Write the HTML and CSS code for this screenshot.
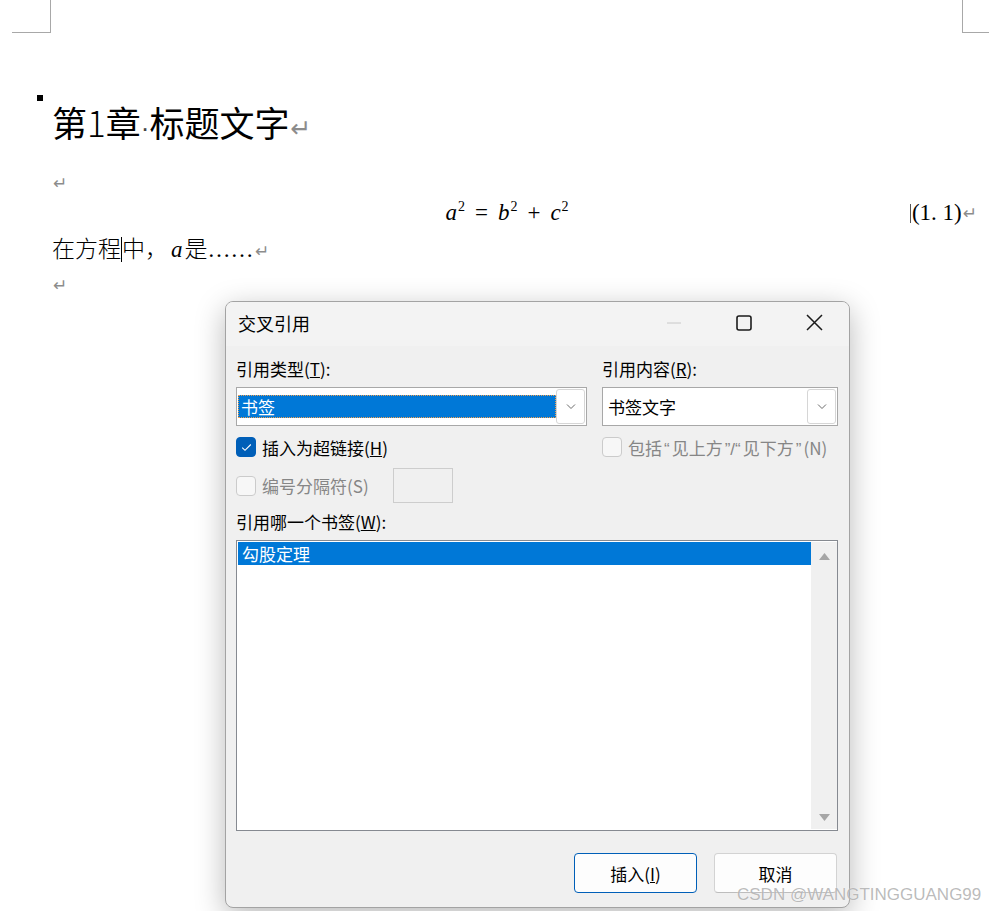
FILE: index.html
```html
<!DOCTYPE html>
<html lang="zh-CN">
<head>
    <meta charset="UTF-8">
    <title>交叉引用</title>
    <link rel="stylesheet" href="styles.css">
</head>
<body>
<div class="page">
    <div class="crop crop-left"></div>
    <div class="crop crop-right"></div>

    <!-- document text behind the dialog -->
    <div class="doc">
        <h1 class="heading"><span class="bullet"></span>第<span class="thin">1</span>章<span class="dot">·</span>标题文字<span class="ret">↵</span></h1>
        <p class="line first"><span class="ret">↵</span></p>
        <div class="line equation">
            <span class="spacer"></span>
            <span class="eq"><i>a</i><sup>2</sup><span class="op">=</span><i>b</i><sup>2</sup><span class="op">+</span><i>c</i><sup>2</sup></span>
            <span class="spacer eq-right"><span class="anchor"></span>(1.&nbsp;1)<span class="ret">↵</span></span>
        </div>
        <p class="line body-text">在方程<span class="caret"></span>中，<i class="var">a</i>是<span class="ellipsis">……</span><span class="ret">↵</span></p>
        <p class="line"><span class="ret">↵</span></p>
    </div>

    <div class="dialog">
        <div class="titlebar">
            <span class="title">交叉引用</span>
            <div class="caption">
                <span class="cap-btn"><svg width="14" height="2" viewBox="0 0 14 2"><path d="M0 1H14" stroke="#c8c8c8" stroke-width="1"/></svg></span>
                <span class="cap-btn"><svg width="16" height="16" viewBox="0 0 16 16"><rect x="1" y="1" width="14" height="14" rx="2" fill="none" stroke="#1b1b1b" stroke-width="1.6"/></svg></span>
                <span class="cap-btn"><svg width="17" height="17" viewBox="0 0 17 17"><path d="M1 1L16 16M16 1L1 16" stroke="#1b1b1b" stroke-width="1.5"/></svg></span>
            </div>
        </div>

        <div class="dialog-body">
            <div class="top-grid">
                <label class="lbl">引用类型(<u>T</u>):</label>
                <label class="lbl">引用内容(<u>R</u>):</label>

                <div class="combo">
                    <span class="combo-value selected">书签</span>
                    <span class="combo-btn"><svg width="10" height="6" viewBox="0 0 10 6"><path d="M1 0.5L5 4.5L9 0.5" fill="none" stroke="#6b6b6b" stroke-width="1"/></svg></span>
                </div>
                <div class="combo">
                    <span class="combo-value plain">书签文字</span>
                    <span class="combo-btn"><svg width="10" height="6" viewBox="0 0 10 6"><path d="M1 0.5L5 4.5L9 0.5" fill="none" stroke="#6b6b6b" stroke-width="1"/></svg></span>
                </div>

                <div class="check-row">
                    <span class="box checked"><svg width="11" height="9" viewBox="0 0 11 9"><path d="M1.2 4.6L4 7.3L9.8 1.5" fill="none" stroke="#fff" stroke-width="1.1"/></svg></span>
                    <span>插入为超链接(<u>H</u>)</span>
                </div>
                <div class="check-row disabled">
                    <span class="box"></span>
                    <span>包括<span class="q">“</span>见上方<span class="q">”/“</span>见下方<span class="q">”</span>(N)</span>
                </div>

                <div class="check-row disabled tall">
                    <span class="box"></span>
                    <span class="sep-label">编号分隔符(S)</span>
                    <span class="sep-field"></span>
                </div>
            </div>

            <label class="lbl lbl-list">引用哪一个书签(<u>W</u>):</label>
            <div class="listbox">
                <div class="list-items">
                    <div class="list-item selected">勾股定理</div>
                </div>
                <div class="scrollbar">
                    <svg width="11" height="7" viewBox="0 0 11 7"><path d="M5.5 0L11 7H0Z" fill="#a6a6a6"/></svg>
                    <svg width="11" height="7" viewBox="0 0 11 7"><path d="M0 0H11L5.5 7Z" fill="#a6a6a6"/></svg>
                </div>
            </div>

            <div class="buttons">
                <span class="btn default">插入(<u>I</u>)</span>
                <span class="btn">取消</span>
            </div>
        </div>
    </div>

    <div class="watermark">CSDN @WANGTINGGUANG99</div>
</div>
</body>
</html>
```

FILE: styles.css
```css
/* page and document */
body {
    margin: 0;
    background: #fff;
    font-family: "Noto Sans CJK SC", "Noto Sans", sans-serif;
    color: #000;
}
.page {
    position: relative;
    width: 989px;
    height: 911px;
    overflow: hidden;
}
.crop {
    position: absolute;
    top: 0;
    height: 32px;
    border-bottom: 1px solid #a8a8a8;
}
.crop-left {
    left: 12px;
    width: 38px;
    border-right: 1px solid #a8a8a8;
}
.crop-right {
    left: 962px;
    width: 27px;
    border-left: 1px solid #a8a8a8;
}
.doc {
    padding: 99px 27px 0 52px;
}
.heading {
    position: relative;
    margin: 0;
    height: 46px;
    line-height: 46px;
    font-size: 35px;
    font-weight: 400;
    white-space: nowrap;
}
.heading .thin {
    font-weight: 300;
}
.heading .dot {
    font-family: "Liberation Sans", sans-serif;
    font-size: 26px;
    color: #444;
}
.heading .ret {
    font-size: 25px;
}
.bullet {
    position: absolute;
    left: -15px;
    top: -4px;
    width: 6px;
    height: 6px;
    background: #000;
}
.ret {
    font-family: "DejaVu Sans", sans-serif;
    font-size: 17px;
    color: #8c8c8c;
    margin-left: 1px;
}
.line {
    margin: 0;
    height: 34px;
    line-height: 34px;
    font-size: 23px;
    white-space: nowrap;
}
.line.first {
    margin-top: 17px;
}
.equation {
    display: flex;
    align-items: center;
    font-family: "Liberation Serif", serif;
}
.spacer {
    flex: 1;
}
.eq i {
    font-size: 23px;
}
.eq sup {
    font-size: 14px;
    vertical-align: 9px;
    line-height: 0;
    margin-left: 1px;
}
.eq .op {
    margin: 0 10px;
}
.eq-right {
    display: flex;
    justify-content: flex-end;
    align-items: center;
}
.eq-right .ret {
    margin-right: -15px;
}
.anchor {
    width: 1px;
    height: 19px;
    background: #555;
    margin-right: 1px;
}
.body-text {
    font-weight: 300;
}
.body-text .var {
    font-family: "Liberation Serif", serif;
    font-weight: 400;
    margin: 0 2px 0 3px;
}
.ellipsis {
    font-family: "Liberation Serif", serif;
    font-weight: 400;
}
.caret {
    display: inline-block;
    width: 1px;
    height: 25px;
    background: #000;
    vertical-align: -5px;
}

/* dialog window */
.dialog {
    position: absolute;
    left: 225px;
    top: 301px;
    width: 623px;
    height: 605px;
    border: 1px solid #a3a3a3;
    border-radius: 8px;
    background: #f0f0f0;
    box-shadow: 0 8px 30px rgba(0, 0, 0, 0.28);
    overflow: hidden;
    font-size: 17px;
}
.titlebar {
    display: flex;
    align-items: center;
    height: 44px;
    background: #f3f3f3;
}
.title {
    flex: 1;
    padding-left: 12px;
    margin-top: -3px;
    font-size: 18px;
}
.caption {
    display: flex;
}
.cap-btn {
    width: 70px;
    height: 44px;
    display: flex;
    align-items: center;
    justify-content: center;
    margin-top: -3px;
}
.dialog-body {
    padding: 12px 11px 14px 10px;
}
.top-grid {
    display: grid;
    grid-template-columns: 351px 236px;
    column-gap: 15px;
}
.lbl {
    display: block;
    height: 22px;
    line-height: 22px;
}
.combo {
    margin-top: 7px;
    height: 39px;
    box-sizing: border-box;
    border: 1px solid #a8a8a8;
    background: #fff;
    display: flex;
    align-items: center;
    padding: 0 1px;
}
.combo-value {
    flex: 1;
    height: 23px;
    line-height: 23px;
}
.combo-value.selected {
    padding-left: 3px;
    background: #0078d7;
    color: #fff;
    outline: 1px dotted #f0a050;
    outline-offset: -1px;
}
.combo-value.plain {
    padding-left: 4px;
}
.combo-btn {
    width: 29px;
    height: 35px;
    box-sizing: border-box;
    border: 1px solid #d6d6d6;
    border-radius: 3px;
    background: #fff;
    display: flex;
    align-items: center;
    justify-content: center;
}
.check-row {
    display: flex;
    align-items: center;
    gap: 6px;
    height: 20px;
    margin-top: 11px;
    white-space: nowrap;
}
.check-row.tall {
    height: 35px;
}
.check-row.disabled {
    color: #868686;
}
.q {
    font-family: "Liberation Sans", sans-serif;
    margin: 0 2px;
}
.box {
    flex-shrink: 0;
    width: 20px;
    height: 20px;
    box-sizing: border-box;
    border: 1px solid #cbcbcb;
    border-radius: 4px;
    background: #f7f7f7;
    display: flex;
    align-items: center;
    justify-content: center;
}
.box.checked {
    border-color: #005fb8;
    background: #005fb8;
}
.sep-label {
    width: 125px;
}
.sep-field {
    width: 60px;
    height: 35px;
    box-sizing: border-box;
    border: 1px solid #cdcdcd;
    background: #f0f0f0;
}
.lbl-list {
    margin-top: 8px;
}
.listbox {
    margin-top: 7px;
    height: 291px;
    box-sizing: border-box;
    border: 1px solid #868a91;
    background: #fff;
    display: flex;
    padding: 1px 0 1px 1px;
}
.list-items {
    flex: 1;
}
.list-item {
    height: 23px;
    line-height: 23px;
    padding-left: 4px;
}
.list-item.selected {
    background: #0078d7;
    color: #fff;
}
.scrollbar {
    width: 26px;
    box-sizing: border-box;
    background: #f0f0f0;
    display: flex;
    flex-direction: column;
    justify-content: space-between;
    align-items: center;
    padding: 11px 0 8px;
}
.buttons {
    display: flex;
    justify-content: flex-end;
    gap: 17px;
    margin-top: 22px;
    padding-right: 1px;
}
.btn {
    width: 123px;
    height: 40px;
    box-sizing: border-box;
    border: 1px solid #d3d3d3;
    border-bottom-color: #bdbdbd;
    border-radius: 4px;
    background: #fdfdfd;
    display: flex;
    align-items: center;
    justify-content: center;
}
.btn.default {
    border-color: #005fb8;
}

/* screenshot watermark */
.watermark {
    position: absolute;
    left: 737px;
    top: 886px;
    font-family: "Liberation Sans", sans-serif;
    font-size: 17px;
    line-height: 17px;
    color: rgba(130, 130, 130, 0.55);
    text-shadow: 0 0 1px rgba(255, 255, 255, 0.9);
    white-space: nowrap;
}
```
